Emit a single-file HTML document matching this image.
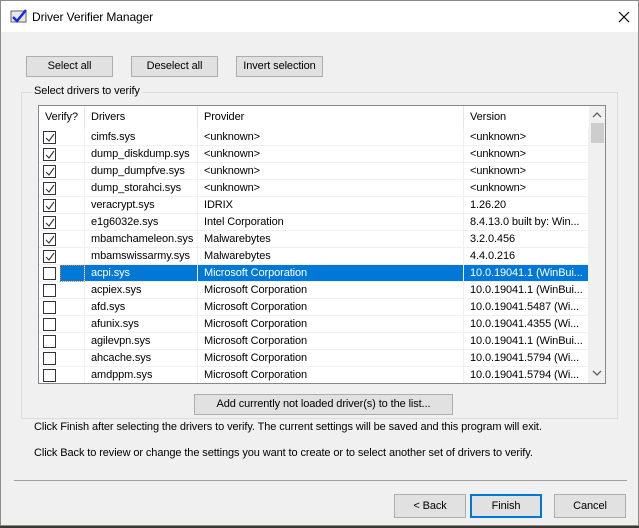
<!DOCTYPE html><html><head><style>
*{box-sizing:border-box;margin:0;padding:0}
body{width:639px;height:528px;overflow:hidden;font-family:"Liberation Sans",sans-serif;font-size:11px;letter-spacing:-0.1px;color:#000;background:#3a3a30;position:relative}
.win{position:absolute;left:0;top:0;width:639px;height:526px;background:#f0f0f0;border:1px solid #8a8a8a}
.title{position:absolute;left:0;top:0;width:637px;height:31px;background:#fff}
.title span{position:absolute;left:31px;top:9px;font-size:12px}
.a{position:absolute}
.btn{position:absolute;background:#e1e1e1;border:1px solid #adadad;text-align:center;line-height:19px}
.grp{position:absolute;left:20px;top:91px;width:597px;height:327px;border:1px solid #dcdcdc}
.lv{position:absolute;left:37px;top:104px;width:568px;height:279px;border:1px solid #828790;background:#fff;overflow:hidden}
.hd{position:absolute;top:0;height:23px;line-height:22px;padding-left:6px;border-right:1px solid #e5e5e5}
.row{position:absolute;left:0;width:550px;height:17px}
.cell{position:absolute;top:0;height:17px;line-height:17px;padding-left:6px;border-right:1px solid #f0f0f0;border-bottom:1px solid #f0f0f0;white-space:nowrap;overflow:hidden}
.cb{position:absolute;left:4px;top:2px;width:13px;height:13px;border:1px solid #333;background:#fff}
.sel .cell.s{background:#0078d7;color:#fff}
</style></head><body>
<div class="win">
<div class="title">
<svg class="a" style="left:9px;top:8px" width="18" height="15"><rect x="1" y="2" width="15" height="11" fill="#e8e8f0" stroke="#666"/><path d="M3 8 L7 12 L16 1" stroke="#1030e0" stroke-width="2.5" fill="none"/></svg>
<span>Driver Verifier Manager</span>
<svg class="a" style="left:617px;top:10px" width="12" height="12"><path d="M1 1L11 11M11 1L1 11" stroke="#000" stroke-width="1.2"/></svg>
</div>
<div class="btn" style="left:25px;top:55px;width:87px;height:21px">Select all</div>
<div class="btn" style="left:130px;top:55px;width:87px;height:21px">Deselect all</div>
<div class="btn" style="left:235px;top:55px;width:87px;height:21px">Invert selection</div>
<div class="grp"></div>
<div class="a" style="left:31px;top:84px;background:#f0f0f0;padding:0 2px">Select drivers to verify</div>
<div class="lv">
<div class="hd" style="left:0;width:46px">Verify?</div>
<div class="hd" style="left:46px;width:113px">Drivers</div>
<div class="hd" style="left:159px;width:266px">Provider</div>
<div class="hd" style="left:425px;width:126px">Version</div>
<div class="a" style="left:550px;top:0;width:17px;height:277px;background:#f0f0f0"></div>
<div class="a" style="left:552px;top:17px;width:13px;height:20px;background:#cdcdcd"></div>
<svg class="a" style="left:553px;top:5px" width="10" height="8"><path d="M1 6L5 2L9 6" stroke="#606060" stroke-width="1.3" fill="none"/></svg>
<svg class="a" style="left:553px;top:263px" width="10" height="8"><path d="M1 2L5 6L9 2" stroke="#606060" stroke-width="1.3" fill="none"/></svg>
<div id="rows"></div>
</div>
<div class="btn" style="left:193px;top:393px;width:259px;height:21px">Add currently not loaded driver(s) to the list...</div>
<div class="a" style="left:33px;top:420px">Click Finish after selecting the drivers to verify. The current settings will be saved and this program will exit.</div>
<div class="a" style="left:33px;top:446px">Click Back to review or change the settings you want to create or to select another set of drivers to verify.</div>
<div class="a" style="left:13px;top:479px;width:613px;height:1px;background:#a0a0a0"></div>
<div class="btn" style="left:393px;top:493px;width:72px;height:24px;line-height:22px">&lt; Back</div>
<div class="btn" style="left:469px;top:493px;width:72px;height:24px;line-height:21px;border:2px solid #0078d7">Finish</div>
<div class="btn" style="left:553px;top:493px;width:72px;height:24px;line-height:22px">Cancel</div>
</div>
<script>
var d=[["cimfs.sys","&lt;unknown&gt;","&lt;unknown&gt;",1],["dump_diskdump.sys","&lt;unknown&gt;","&lt;unknown&gt;",1],["dump_dumpfve.sys","&lt;unknown&gt;","&lt;unknown&gt;",1],["dump_storahci.sys","&lt;unknown&gt;","&lt;unknown&gt;",1],["veracrypt.sys","IDRIX","1.26.20",1],["e1g6032e.sys","Intel Corporation","8.4.13.0 built by: Win...",1],["mbamchameleon.sys","Malwarebytes","3.2.0.456",1],["mbamswissarmy.sys","Malwarebytes","4.4.0.216",1],["acpi.sys","Microsoft Corporation","10.0.19041.1 (WinBui...",0],["acpiex.sys","Microsoft Corporation","10.0.19041.1 (WinBui...",0],["afd.sys","Microsoft Corporation","10.0.19041.5487 (Wi...",0],["afunix.sys","Microsoft Corporation","10.0.19041.4355 (Wi...",0],["agilevpn.sys","Microsoft Corporation","10.0.19041.1 (WinBui...",0],["ahcache.sys","Microsoft Corporation","10.0.19041.5794 (Wi...",0],["amdppm.sys","Microsoft Corporation","10.0.19041.5794 (Wi...",0]];
var h="";d.forEach(function(r,i){var ck=r[3]?'<svg style="position:absolute;left:1px;top:1px" width="10" height="10"><path d="M1 5L4 8L9 1" stroke="#333" stroke-width="1.1" fill="none"/></svg>':'';
h+='<div class="row'+(i==8?' sel':'')+'" style="top:'+(23+17*i)+'px"><div class="cell" style="left:0;width:46px"><div class="cb">'+ck+'</div></div>'+(i==8?'<div class="cell s" style="left:21px;width:25px;outline:1px dotted #e08030;outline-offset:-1px"></div>':'')+'<div class="cell s" style="left:46px;width:113px">'+r[0]+'</div><div class="cell s" style="left:159px;width:266px">'+r[1]+'</div><div class="cell s" style="left:425px;width:125px">'+r[2]+'</div></div>';});
document.getElementById("rows").innerHTML=h;
</script>
</body></html>
